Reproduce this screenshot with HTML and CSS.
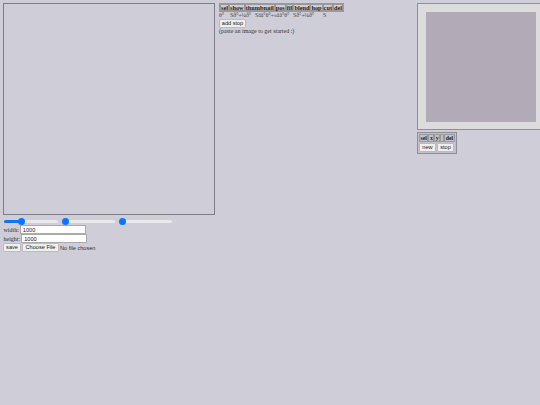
FILE: index.html
```html
<!DOCTYPE html>
<html lang="en">
<head>
  <meta charset="UTF-8">
  <title>gradient editor</title>
  <link rel="stylesheet" href="styles.css">
</head>
<body>
  <div class="page">
    <div class="left">
      <div class="canvas"></div>
      <div class="sliders">
        <input type="range" class="s1" min="0" max="100" value="30">
        <input type="range" class="s2" min="0" max="100" value="0">
        <input type="range" class="s3" min="0" max="100" value="0">
      </div>
      <div class="size-row"><label for="w">width:</label><input type="text" id="w" class="w-input" value="1000"></div>
      <div class="size-row"><label for="h">height:</label><input type="text" id="h" class="h-input" value="1000"></div>
      <div class="save-row">
        <button class="btn">save</button><button class="btn file-btn">Choose File</button><span class="no-file">No file chosen</span>
      </div>
    </div>

    <div class="middle">
      <table class="stops">
        <tr>
          <th>sel</th><th>show</th><th>thumbnail</th><th>pos</th><th>fil</th><th>blend</th><th>hop</th><th>cut</th><th>del</th>
        </tr>
      </table>
      <div class="stop-chars">
        <span class="c1">θ°</span><span class="c2">Sð°÷¼ð°</span><span class="c3">Sää°θ°÷«ää°θ°</span><span class="c4">Sð°÷¼ð°</span><span class="c5">S</span>
      </div>
      <button class="btn add-stop">add stop</button>
      <p class="hint">(paste an image to get started :)</p>
    </div>

    <div class="right">
      <div class="preview"><div class="preview-inner"></div></div>
      <div class="points">
        <table class="point-table">
          <tr><th>sel</th><th>x</th><th>y</th><th class="blank"></th><th>del</th></tr>
        </table>
        <div class="point-btns"><button class="btn">new</button><button class="btn">stop</button></div>
      </div>
    </div>
  </div>
</body>
</html>
```

FILE: styles.css
```css
* { box-sizing: border-box; }
html, body { height: 100%; }
body {
  margin: 0;
  background-color: #cfcdd7;
  font-family: "Liberation Serif", serif;
  font-size: 7px;
  color: #333;
  overflow: hidden;
}
.page {
  display: flex;
  align-items: flex-start;
  padding-top: 3px;
}
.left {
  width: 219px;
  padding-left: 3px;
  flex: none;
}
.canvas {
  width: 212px;
  height: 212px;
  border: 1px solid #7f7e88;
}
.sliders {
  display: flex;
  margin-top: 2px;
  height: 8px;
}
.sliders input {
  -webkit-appearance: none;
  appearance: none;
  height: 8px;
  margin: 0;
  background: transparent;
}
.sliders input::-webkit-slider-runnable-track {
  height: 3px;
  border-radius: 1.5px;
  background: #e9e9ec;
}
.sliders input::-webkit-slider-thumb {
  -webkit-appearance: none;
  width: 7px;
  height: 7px;
  margin-top: -2px;
  border-radius: 50%;
  background: #0a75ff;
}
.s1 {
  width: 54px;
  margin-left: 1px !important;
}
.s1::-webkit-slider-runnable-track {
  background: linear-gradient(to right, #0a75ff 30%, #e9e9ec 30%) !important;
}
.s2 { width: 53px; margin-left: 4px !important; }
.s3 { width: 53px; margin-left: 4px !important; }
.size-row {
  display: flex;
  align-items: center;
  gap: 1px;
  height: 9px;
  color: #333;
}
.size-row label { margin-left: 0.5px; font-size: 6px; }
.size-row input {
  height: 9px;
  padding: 0 2px;
  border: 1px solid #aaa;
  background: #fff;
  font-family: "Liberation Sans", sans-serif;
  font-size: 5.6px;
  color: #222;
}
.w-input { width: 66px; }
.h-input { width: 66px; }
.save-row {
  display: flex;
  align-items: center;
  height: 9px;
}
.btn {
  height: 9px;
  padding: 0 2px;
  border: 1px solid #bbb;
  border-radius: 1px;
  background: #efefef;
  font-family: "Liberation Sans", sans-serif;
  font-size: 5.6px;
  line-height: 1;
  color: #222;
}
.save-row .btn:first-child { width: 18px; }
.file-btn { width: 37px; margin-left: 1px; }
.no-file {
  margin-left: 1px;
  font-family: "Liberation Sans", sans-serif;
  font-size: 5.6px;
  color: #333;
}
.middle {
  width: 198px;
  flex: none;
}
.stops, .point-table {
  border-collapse: separate;
  border-spacing: 0;
  border: 1px solid #999;
}
.stops th, .point-table th {
  padding: 0;
  border: 1px solid #999;
  font-size: 6.3px;
  line-height: 5px;
  color: #222;
}
.stop-chars {
  display: flex;
  height: 7px;
  font-size: 5.8px;
  line-height: 7px;
  color: #444;
}
.c1 { width: 11px; }
.c2 { width: 25px; }
.c3 { width: 38px; }
.c4 { width: 30px; }
.c5 { width: 6px; }
.add-stop {
  display: block;
  width: 27px;
  height: 9px;
  padding: 0;
}
.hint {
  margin: 0;
  font-size: 6px;
  line-height: 7px;
  color: #333;
}
.right {
  flex: 1;
  min-width: 0;
}
.preview {
  height: 127px;
  padding: 8px;
  border: 1px solid #8f8e98;
  border-right: none;
  background: #dcdcdc;
}
.preview-inner {
  width: 110px;
  height: 110px;
  background: #b3aab8;
}
.points {
  display: inline-block;
  width: 40px;
  margin-top: 2px;
  padding: 1px;
  border: 1px solid #8f8e98;
  background: #c2c1c9;
}
.point-table { border: none; }
.point-table th { padding: 0 0.5px; font-size: 5.8px; line-height: 6px; }
.point-table .blank { width: 4px; }
.point-btns {
  display: flex;
  gap: 1px;
  margin-top: 1px;
}
.point-btns .btn { padding: 0 1px; width: 17px; }
```
